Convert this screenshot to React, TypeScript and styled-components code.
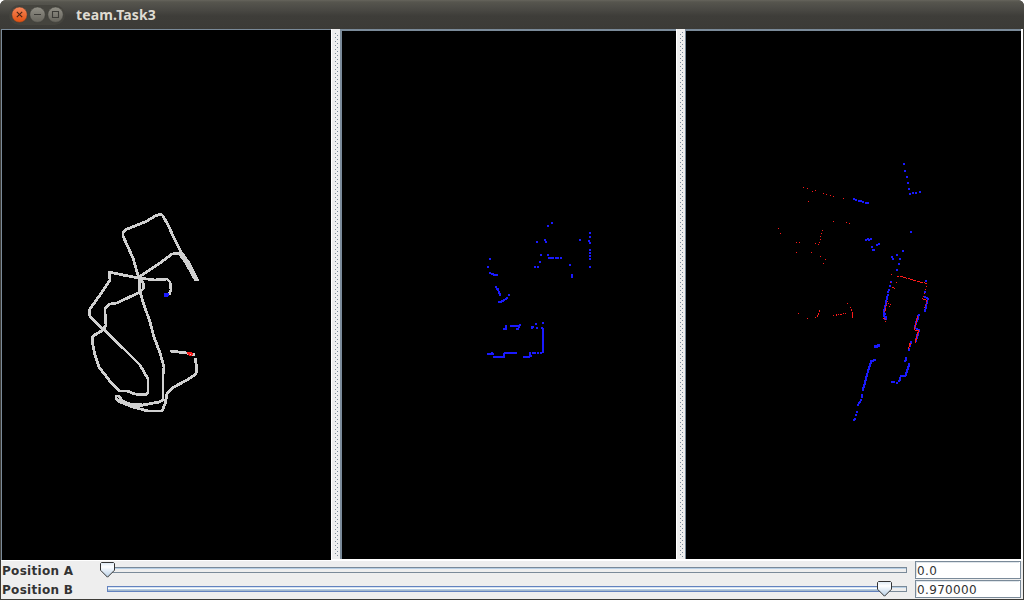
import React from 'react';
import styled, { createGlobalStyle } from 'styled-components';

const GlobalStyle = createGlobalStyle`
  body { margin: 0; background: #fff; overflow: hidden; }
  * { box-sizing: border-box; }
`;

const Window = styled.main`
  width: 1024px;
  height: 600px;
  display: flex;
  flex-direction: column;
  background: #3c3b37;
  border-radius: 6px 6px 0 0;
  overflow: hidden;
  font-family: 'DejaVu Sans', sans-serif;
`;

const TitleBar = styled.header`
  height: 29px;
  flex: none;
  display: flex;
  align-items: center;
  padding-left: 9px;
  background: linear-gradient(#66645c 0, #56554e 2px, #4b4a45 9px, #3e3d39 16px, #3c3b37 100%);
`;

const WindowButtons = styled.div`
  display: flex;
  width: 56px;
  height: 20px;
  align-items: center;
  padding-left: 1px;
  border-radius: 10px;
  background: #45443e;
`;

const Title = styled.h1`
  margin: 0 0 0 11px;
  font: 700 14px/20px 'Noto Sans', sans-serif;
  letter-spacing: 0.15px;
  color: #dfdbd2;
`;

const Content = styled.div`
  height: 570px;
  margin: 0 1px 1px;
  background: #eee;
  display: flex;
  flex-direction: column;
`;

const Panes = styled.section`
  height: 532px;
  flex: none;
  display: flex;
  align-items: flex-start;
  background: #fff;
`;

const Pane = styled.div<{ $width: number; $height: number; $border: string }>`
  width: ${p => p.$width}px;
  height: ${p => p.$height}px;
  border: 0 solid #7a8a99;
  border-width: ${p => p.$border};
  background: #000;
  overflow: hidden;
  svg { display: block; }
`;

const Divider = styled.div`
  width: 9px;
  height: 530px;
  flex: none;
  background: #eee;
  border-left: 1px solid #fff;
  svg { display: block; }
`;

const Controls = styled.section`
  display: flex;
  flex-direction: column;
  margin-top: -1px;
`;

const ControlRow = styled.div`
  display: flex;
  height: 19px;
  align-items: flex-start;
`;

const Label = styled.label`
  width: 98px;
  padding-left: 1px;
  font-size: 12px;
  font-weight: 700;
  line-height: 23px;
  letter-spacing: 0.3px;
  color: #333;
`;

const Slider = styled.div`
  width: 816px;
  height: 19px;
`;

const Field = styled.output`
  width: 106px;
  height: 18px;
  margin-top: 1px;
  padding-left: 1px;
  background: #fff;
  border: 1px solid #7a8a99;
  box-shadow: inset -1px -1px #fff, inset 1px 1px #dfe5ea;
  font-size: 12px;
  line-height: 18px;
  letter-spacing: 0.35px;
  color: #333;
`;

type Mark = [x: number, y: number, w?: number, h?: number];

const scanB: Mark[] = [
  [551,222],[547,225],[544,239],[545,241],[536,241],[579,239],[589,232],[589,236],[588,240],[589,242],
  [589,249],[589,252],[589,255],[589,258],[589,266],[540,254],[547,254],[548,257,6],[555,257,4],[560,257],
  [539,261],[534,266],[537,266],[569,264],[571,274,2,4],[489,258],[487,266],[489,272],[491,273,3],[493,274,5],
  [495,286],[496,288,3],[497,289],[498,291,2,3],[499,293,2,3],[508,294],[506,297],[505,298],[503,299],
  [501,300,3],[498,301,4],[535,323],[542,322],[505,325,2,5],[503,328,4],[510,325,10],[519,324],[518,326],
  [516,328,3],[531,326,3],[531,327],[536,327],[541,327],[542,328,2,25],[540,352],[537,352],[532,352,4],
  [529,352,2,5],[530,355],[523,356,7],[504,352,13],[503,353,2,5],[493,356,12],[491,352],[487,353,7],
];

const mapBlue: Mark[] = [
  [903,163],[904,170],[906,176],[907,182],[908,188],[909,193],[912,192],[915,192],[919,191],[853,198],
  [855,199],[858,200,4],[862,201],[865,202,4],[910,231],[865,239],[867,238],[868,239],[870,238],[871,246],
  [872,249,3],[876,244],[878,243],[902,250],[896,254],[891,256],[892,258],[899,258],[898,263],[896,269],
  [890,281],[889,285],[888,289],[887,291],[887,294],[886,296,2,4],[885,300,2,6],[884,305,2,5],[883,309,2,8],
  [884,313],[884,316,3,4],[925,280],[924,291],[924,296],[926,297],[927,298],[926,300,2,4],[925,304,2,5],
  [924,309,2,3],[918,314],[917,315,2,5],[916,318,2,4],[915,321,2,4],[914,325,2,4],[916,328],[918,329,2,3],
  [917,332,2,4],[916,334,2,5],[915,338,2,4],[910,341,2,3],[909,344,2,3],[908,348,2,3],[874,345,4,3],
  [877,344,3,3],[905,357,2,4],[904,360],[908,363,2,4],[907,366,2,4],[906,369,2,4],[905,372,2,4],[900,375,6],
  [899,377,2,4],[898,380],[896,382],[891,381,4],[873,359,3],[870,360,4],[870,361,2,3],[869,363,2,4],
  [868,366,2,4],[867,369,2,4],[866,373,2,4],[865,376,2,5],[864,380,2,5],[863,384,2,4],[862,387,2,4],
  [861,394,2,4],[860,399],[859,401],[858,402],[857,404],[856,411],[855,414],[854,418],[853,419],
];

const mapRed: Mark[] = [
  [803,187],[807,188],[812,191],[815,190],[823,193],[826,194],[830,195],[833,196],[843,198],[808,201],
  [833,221],[846,222],[849,223],[778,228],[780,233],[796,242],[799,242],[796,252],[811,252],[822,230],
  [821,233],[820,236],[820,239],[819,242],[818,244],[815,243],[820,256],[825,259],[823,263],[891,274],
  [897,276,2],[900,276,3],[903,277,3],[906,278],[908,278,2],[910,279,3],[913,280,3],[917,281,3],[920,282,3],
  [924,282],[925,283,2],[896,282],[890,282],[892,287,2],[894,288],[926,286],[925,289],[924,293],[923,296],
  [922,298],[923,299,3],[926,300,1,2],[926,303],[925,305],[924,307],[887,301],[886,303],[888,303],[890,304],
  [889,306],[886,305],[885,306],[885,308,1,3],[884,311],[883,318,2],[885,319],[885,321],[798,313],[807,318],
  [815,317],[817,315,1,2],[818,313,1,2],[819,310,1,2],[833,315],[836,314,1,2],[838,314],[840,314,2],
  [843,313],[845,313],[847,303],[850,307],[851,309,1,2],[852,312,1,6],[917,316,1,3],[916,319,1,4],
  [915,323,1,4],[914,327,1,3],[915,330,4],[918,330,1,3],[917,332,1,4],[916,336,1,4],[915,339,1,4],
  [909,343,2,2],[909,345,1,2],[908,347,1,2],
];

const tracks = [
  '198,281 190,266 182,254 175,240 168,225 163,216 161,214 155,216 147,221 135,226 127,229 123,232 123,236 128,247 133,258 137,272 139,279 140,292 144,305 150,322 154,337 160,353 164,367 163,375 163,400 159,402 143,405 130,404 122,401 119,396 116,396 116,399 120,402 133,407 148,411 162,411 165,404 167,394 172,388 187,380 196,374 197,368 195,358',
  '139,278 123,275 109,272 110,280 100,295 90,309 89,313 91,318 103,329 123,348 140,365 148,379 148,392 146,395 135,394 127,391 120,391 113,385 99,367 95,355 92,340 93,336 103,330 106,325 105,312 105,308 110,304 117,303 140,292 144,288 143,283 139,277 160,263 172,254 179,253 186,263 196,281',
  '139,278 155,280 167,279 170,282 171,290 169,295',
  '170,351 187,353 195,355',
  '123,403 133,405 143,406',
  '181,252 189,263 193,271',
];

function Marks({ data, color, size }: { data: Mark[]; color: string; size: number }) {
  const d = data.map(([x, y, w = size, h = size]) => `M${x} ${y}h${w}v${h}h${-w}z`).join('');
  return <path d={d} fill={color} fillRule="nonzero" />;
}

function Plot({ x, y, w, h, children }: { x: number; y: number; w: number; h: number; children: React.ReactNode }) {
  return <svg width={w} height={h} viewBox={`${x} ${y} ${w} ${h}`} shapeRendering="crispEdges">{children}</svg>;
}

function Grip({ id, x, offset }: { id: string; x: number; offset: number }) {
  return (
    <svg width="8" height="530" shapeRendering="crispEdges">
      <defs>
        <pattern id={id} x={x} y={offset} width="4" height="4" patternUnits="userSpaceOnUse">
          <path d="M0 0h1v1h-1zM2 2h1v1h-1z" fill="#7a8a99" />
        </pattern>
      </defs>
      <rect x={x} y="3" width="3" height="525" fill={`url(#${id})`} />
    </svg>
  );
}

function RoundButton({ kind }: { kind: 'close' | 'min' | 'max' }) {
  const hot = kind === 'close';
  return (
    <svg width="18" height="18" viewBox="0 0 18 18">
      <defs>
        <linearGradient id={`btn-${kind}`} x2="0" y2="1">
          <stop stopColor={hot ? '#f7875b' : '#918f86'} />
          <stop offset="1" stopColor={hot ? '#e2500f' : '#66645c'} />
        </linearGradient>
      </defs>
      <circle cx="9.5" cy="8.7" r="7.7" fill={`url(#btn-${kind})`} stroke="#393834" strokeWidth=".5" />
      <g fill="none" stroke={hot ? '#4a2415' : '#3c3b37'} strokeWidth="1.1">
        {kind === 'close' && <path d="M6.8 5.8l5.4 5.4M12.2 5.8l-5.4 5.4" />}
        {kind === 'min' && <path d="M6 8.5h7" />}
        {kind === 'max' && <path d="M6.5 5.5h6v6h-6z" />}
      </g>
    </svg>
  );
}

function SliderArt({ id, thumb, filled }: { id: string; thumb: number; filled?: boolean }) {
  return (
    <Slider>
      <svg width="815" height="21" overflow="visible">
        <defs>
          <linearGradient id={`thumb-${id}`} x2="0" y2="1">
            <stop stopColor="#dbe8f4" />
            <stop offset=".3" stopColor="#fff" />
            <stop offset=".45" stopColor="#edf4fb" />
            <stop offset="1" stopColor="#b8cfe5" />
          </linearGradient>
        </defs>
        <g shapeRendering="crispEdges">
          <rect x="8.5" y="7.5" width="799" height="5" fill="#eee" stroke="#7a8a99" />
          <path d="M9 8.5h798" stroke="#b8cfe5" />
          {filled && (
            <>
              <rect x="8.5" y="7.5" width={thumb} height="5" fill="#b8cfe5" stroke="#6382bf" />
              <path d={`M9 8.5h${thumb}`} stroke="#d5e3f1" />
              <path d={`M9 9.5h${thumb}`} stroke="#fff" />
              <path d={`M9 11.5h${thumb}`} stroke="#a3b8cc" />
            </>
          )}
        </g>
        <path d={`M${thumb + 2.5} 2.5h12l1 1v6.7l-7 7-7-7v-6.7z`} fill={`url(#thumb-${id})`} stroke="#333" />
      </svg>
    </Slider>
  );
}

export default function App() {
  return (
    <>
      <GlobalStyle />
      <Window>
        <TitleBar>
          <WindowButtons>
            <RoundButton kind="close" />
            <RoundButton kind="min" />
            <RoundButton kind="max" />
          </WindowButtons>
          <Title>team.Task3</Title>
        </TitleBar>
        <Content>
          <Panes>
            <Pane $width={330} $height={531} $border="1px 0 0 1px">
              <Plot x={2} y={30} w={329} h={530}>
                {tracks.map(points => (
                  <polyline key={points} points={points} fill="none" stroke="#d0d0d0" strokeWidth="2.8" strokeLinejoin="round" />
                ))}
                <path d="M164 293h5v3h-1v1h-4z" fill="#1a1aff" />
                <path d="M187 352h5v1h1v2h-1v1h-3v-1h-1v-1h-1z" fill="#ff1a1a" />
                <path d="M190 354h1v1h-1z" fill="#d0d0d0" />
              </Plot>
            </Pane>
            <Divider><Grip id="grip-a" x={3} offset={4} /></Divider>
            <Pane $width={336} $height={530} $border="2px 0 0 2px">
              <Plot x={342} y={31} w={334} h={528}>
                <Marks data={scanB} color="#1a1aff" size={2} />
              </Plot>
            </Pane>
            <Divider><Grip id="grip-b" x={3} offset={1} /></Divider>
            <Pane $width={336} $height={530} $border="2px 0 0 1px">
              <Plot x={686} y={31} w={335} h={528}>
                <Marks data={mapBlue} color="#1a1aff" size={2} />
                <Marks data={mapRed} color="#ff1a1a" size={1} />
              </Plot>
            </Pane>
          </Panes>
          <Controls>
            <ControlRow>
              <Label>Position A</Label>
              <SliderArt id="a" thumb={0} />
              <Field>0.0</Field>
            </ControlRow>
            <ControlRow>
              <Label>Position B</Label>
              <SliderArt id="b" thumb={777} filled />
              <Field>0.970000</Field>
            </ControlRow>
          </Controls>
        </Content>
      </Window>
    </>
  );
}
